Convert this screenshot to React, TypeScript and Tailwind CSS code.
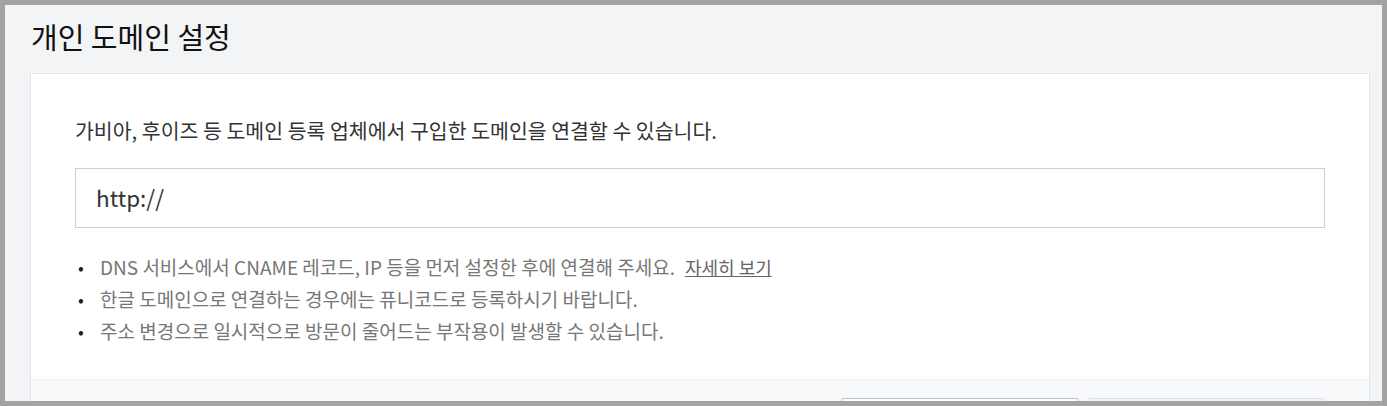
const font = { fontFamily: '"Noto Sans CJK KR", "Noto Sans", sans-serif' };

const notes = [
  "DNS 서비스에서 CNAME 레코드, IP 등을 먼저 설정한 후에 연결해 주세요.",
  "한글 도메인으로 연결하는 경우에는 퓨니코드로 등록하시기 바랍니다.",
  "주소 변경으로 일시적으로 방문이 줄어드는 부작용이 발생할 수 있습니다.",
];

export default function App() {
  return (
    <div
      className="h-[406px] w-[1387px] overflow-hidden border-[5px] border-[#a3a3a3] bg-[#f3f4f6]"
      style={font}
    >
      <div className="pl-[25px] pr-[12px]">
        <h1 className="pt-[12px] pl-[1px] text-[29px] leading-[38px] font-normal text-[#111]">
          개인 도메인 설정
        </h1>
        <div className="mt-[18px] border border-[#e3e6ea] bg-white">
          <div className="px-[44px] pt-[42px] pb-[32px]">
            <p className="text-[20.5px] leading-[28px] text-[#333]">
              가비아, 후이즈 등 도메인 등록 업체에서 구입한 도메인을 연결할 수 있습니다.
            </p>
            <div className="mt-[24px] flex h-[60px] items-center border border-[#c9cfd6] px-[20px] text-[22.5px] text-[#333]">
              http://
            </div>
            <ul className="mt-[23px] pl-[3px] text-[19px] leading-[32px] text-[#777]">
              {notes.map((n, i) => (
                <li key={i} className="flex">
                  <span className="w-[22px] text-[17px] text-[#222]">•</span>
                  <span>
                    {n}
                    {i === 0 && (
                      <a className="ml-[10px] text-[18px] underline text-[#666]" href="#">
                        자세히 보기
                      </a>
                    )}
                  </span>
                </li>
              ))}
            </ul>
          </div>
          <div className="flex justify-end gap-[8px] border-t border-[#eef0f3] bg-[#f8f9fb] px-[44px] pt-[18px] pb-[18px]">
            <div className="h-[50px] w-[238px] rounded-[3px] border border-[#b9c2cc] bg-white" />
            <div className="h-[50px] w-[238px] rounded-[3px] border border-[#dde2e8] bg-[#f3f5f8]" />
          </div>
        </div>
      </div>
    </div>
  );
}
